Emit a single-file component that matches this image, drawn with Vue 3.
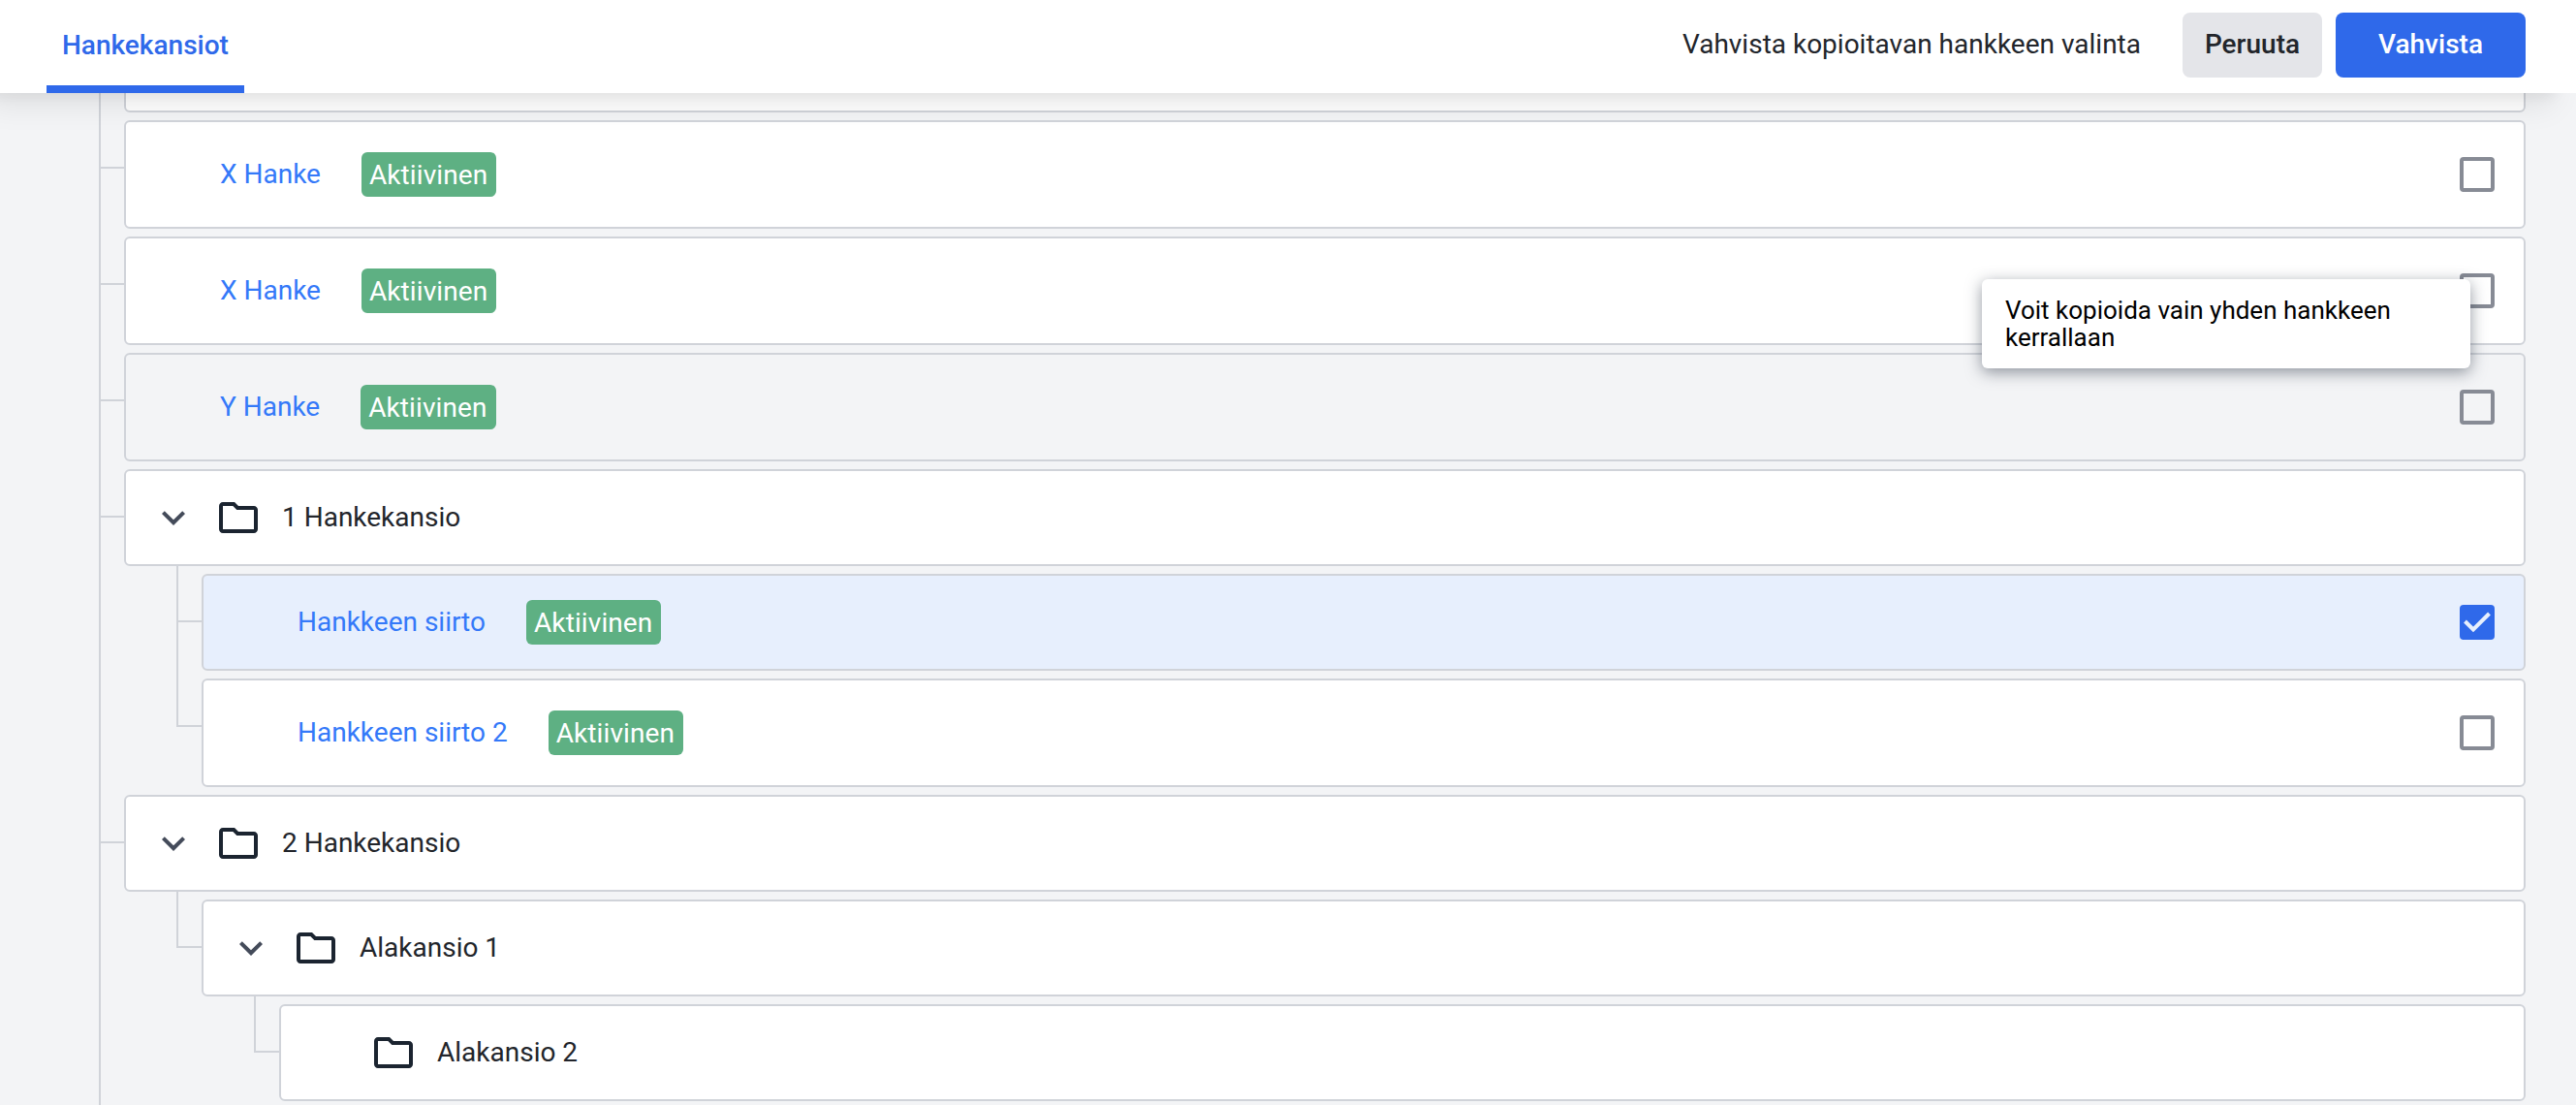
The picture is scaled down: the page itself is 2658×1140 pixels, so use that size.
<template>
  <div class="page">
    <header class="topbar">
      <nav class="tabs">
        <a class="tab active">Hankekansiot</a>
      </nav>
      <div class="confirm">
        <span class="confirm-text">Vahvista kopioitavan hankkeen valinta</span>
        <button class="btn cancel">Peruuta</button>
        <button class="btn primary">Vahvista</button>
      </div>
    </header>

    <main class="tree">
      <div
        v-for="row in rows"
        :key="row.id"
        class="node"
      >
        <span v-for="n in row.level" :key="n" class="guide" :class="guideClass(row, n)"></span>
        <div class="card" :class="[row.type, { hovered: row.hovered, selected: row.checked }]">
          <span class="toggle">
            <svg v-if="row.open" viewBox="0 0 24 24" class="icon chevron">
              <path d="M16.59 8.59 12 13.17 7.41 8.59 6 10l6 6 6-6z" />
            </svg>
          </span>
          <template v-if="row.type === 'folder'">
            <svg viewBox="0 0 24 24" class="icon folder-icon">
              <path d="M9.17 6l2 2H20v10H4V6h5.17M10 4H4c-1.1 0-1.99.9-1.99 2L2 18c0 1.1.9 2 2 2h16c1.1 0 2-.9 2-2V8c0-1.1-.9-2-2-2h-8l-2-2z" />
            </svg>
            <span class="folder-name">{{ row.name }}</span>
          </template>
          <template v-else-if="row.name">
            <a class="project-name">{{ row.name }}</a>
            <span class="badge">Aktiivinen</span>
            <span class="checkbox" :class="{ checked: row.checked }">
              <svg v-if="row.checked" viewBox="0 0 36 36">
                <path d="M5.5 17 14 25.5 30.5 9" />
              </svg>
            </span>
            <div v-if="row.tooltip" class="tooltip">{{ row.tooltip }}</div>
          </template>
        </div>
      </div>
    </main>
  </div>
</template>

<script setup>
const rows = [
  { id: 0, type: 'project', level: 1, name: '' },
  { id: 1, type: 'project', level: 1, name: 'X Hanke' },
  { id: 2, type: 'project', level: 1, name: 'X Hanke', tooltip: 'Voit kopioida vain yhden hankkeen kerrallaan' },
  { id: 3, type: 'project', level: 1, name: 'Y Hanke', hovered: true },
  { id: 4, type: 'folder', level: 1, name: '1 Hankekansio', open: true },
  { id: 5, type: 'project', level: 2, name: 'Hankkeen siirto', checked: true },
  { id: 6, type: 'project', level: 2, name: 'Hankkeen siirto 2', last: true },
  { id: 7, type: 'folder', level: 1, name: '2 Hankekansio', open: true },
  { id: 8, type: 'folder', level: 2, name: 'Alakansio 1', open: true, last: true },
  { id: 9, type: 'folder', level: 3, name: 'Alakansio 2', last: true },
  { id: 10, type: 'project', level: 1, name: '' },
];

// The innermost guide branches to the card, outer ones only pass by.
// The second level has already ended above a third level row.
function guideClass(row, n) {
  return {
    branch: n === row.level,
    end: n === row.level && row.last,
    empty: n > 1 && n < row.level,
  };
}
</script>

<style>
body {
  margin: 0;
  overflow: hidden;
}
</style>

<style scoped>
.page {
  height: 1140px;
  overflow: hidden;
  display: flex;
  flex-direction: column;
  background: #f3f4f6;
  font-family: Roboto, sans-serif;
  font-size: 28px;
  color: #22252b;
}

.topbar {
  position: relative;
  z-index: 2;
  flex: none;
  box-sizing: border-box;
  height: 96px;
  padding: 0 52px 0 48px;
  display: flex;
  justify-content: space-between;
  background: #fff;
  box-shadow: -17px 20px 30px -6px rgba(0, 0, 0, 0.08), -17px 8px 12px -4px rgba(0, 0, 0, 0.05);
}

.tabs {
  display: flex;
}

.tab {
  box-sizing: border-box;
  width: 204px;
  padding-left: 16px;
  line-height: 93px;
  font-weight: 500;
  height: 96px;
  white-space: nowrap;
  border-bottom: 8px solid transparent;
}

.tab.active {
  color: #2f69ea;
  border-color: #2f69ea;
}

.confirm {
  display: flex;
  align-items: center;
  padding-bottom: 3px;
}

.confirm-text {
  margin-right: 43px;
  padding-bottom: 2px;
  white-space: nowrap;
}

.btn {
  height: 67px;
  padding: 0 0 2px;
  border: none;
  border-radius: 8px;
  font: 500 28px Roboto, sans-serif;
  color: #22252b;
}

.cancel {
  width: 144px;
  background: #e4e5e9;
}

.primary {
  width: 196px;
  margin-left: 14px;
  background: #2f69ea;
  color: #fff;
}

.tree {
  flex: none;
  display: flex;
  flex-direction: column;
  margin-top: -100px;
  padding: 0 52px 0 102px;
}

.node {
  display: flex;
  padding-top: 8px;
}

.guide {
  flex: none;
  box-sizing: border-box;
  width: 80px;
  margin-top: -8px;
  border-left: 2px solid #d0d3d9;
}

.guide.branch {
  width: 26px;
}

.guide.branch::after {
  content: '';
  display: block;
  margin-top: 56px;
  height: 2px;
  background: #d0d3d9;
}

.guide.end {
  height: 58px;
}

.guide.empty {
  border-color: transparent;
}

.card {
  position: relative;
  flex: 1;
  box-sizing: border-box;
  height: 112px;
  padding-right: 30px;
  display: flex;
  align-items: center;
  background: #fff;
  border: 2px solid #d0d3d9;
  border-radius: 6px;
}

.card.folder,
.card.selected {
  height: 100px;
}

.card.hovered {
  background: #f3f4f6;
}

.card.selected {
  background: #e7effd;
}

.toggle {
  display: flex;
  width: 71px;
  padding-left: 25px;
}

.icon {
  width: 48px;
  height: 48px;
}

.chevron {
  fill: #444b5a;
}

.folder-icon {
  margin-left: -4px;
  fill: #1b2430;
}

.folder-name {
  margin-left: 21px;
  padding-bottom: 2px;
}

.project-name {
  margin-left: 1px;
  padding-bottom: 2px;
  color: #3479f9;
}

.badge {
  box-sizing: border-box;
  height: 46px;
  margin-left: 42px;
  padding: 0 9px 0 8px;
  line-height: 47px;
  letter-spacing: 0.1px;
  border-radius: 6px;
  background: #5eb083;
  color: #fff;
}

.checkbox {
  box-sizing: border-box;
  width: 36px;
  height: 36px;
  margin-left: auto;
  border: 4px solid #878b95;
  border-radius: 4px;
}

.checkbox.checked {
  border: none;
  background: #2f69ea;
}

.checkbox svg {
  display: block;
  fill: none;
  stroke: #e7effd;
  stroke-width: 4;
}

.tooltip {
  position: absolute;
  z-index: 1;
  top: 42px;
  right: 55px;
  box-sizing: border-box;
  width: 504px;
  height: 92px;
  padding: 18px 24px;
  line-height: 28px;
  font-size: 26px;
  color: #000;
  background: #fff;
  border-radius: 6px;
  box-shadow: 0 4px 16px rgba(40, 50, 65, 0.5);
}
</style>
